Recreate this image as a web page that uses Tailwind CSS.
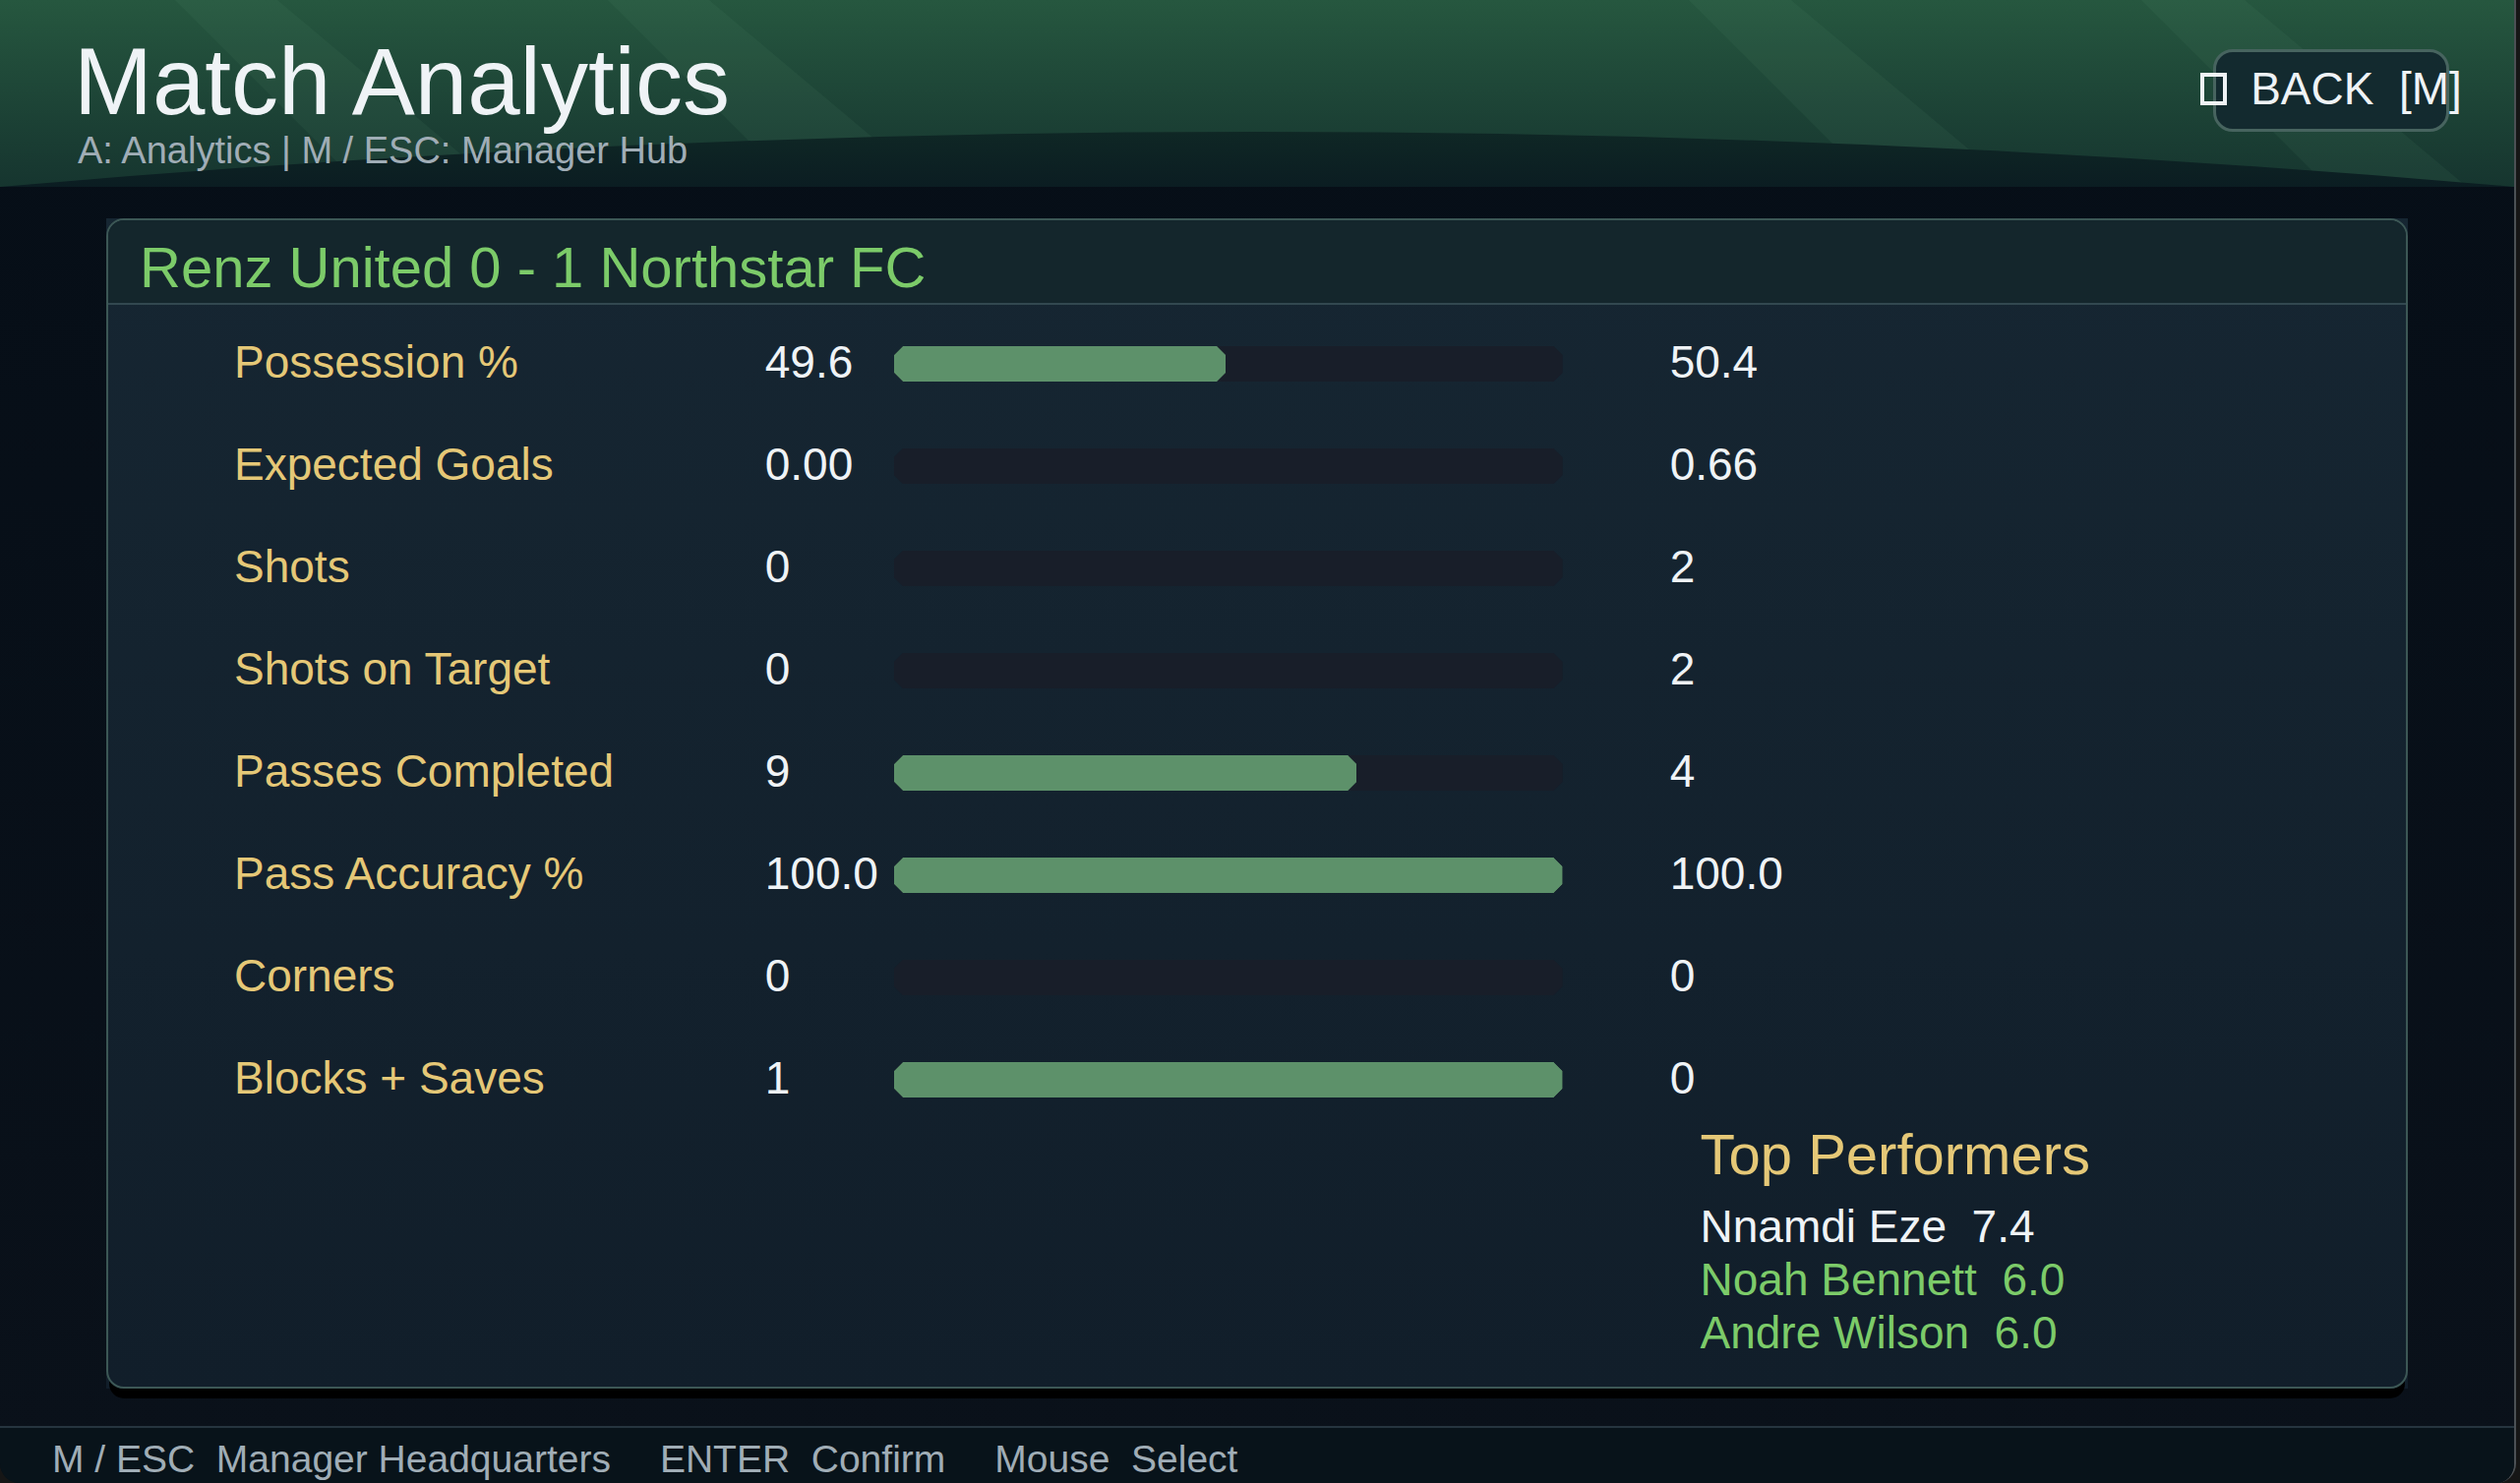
<!DOCTYPE html>
<html lang="en">
<head>
  <meta charset="UTF-8">
  <title>Match Analytics</title>
  <meta name="viewport" content="width=device-width, initial-scale=1.0">
  <script src="https://cdn.jsdelivr.net/npm/@tailwindcss/browser@4"></script>
</head>
<body class="bg-[#161616] font-['Liberation_Sans',Arial,sans-serif] text-[#eff3f6]">
  <div class="mr-1 min-h-screen flex flex-col overflow-hidden border-r-2 border-[#4b5054] rounded-b-[20px] bg-linear-to-b from-[#060e17] to-[#0a111a]">

    <header class="relative h-[190px] shrink-0 overflow-hidden bg-linear-to-b from-[#26573f] to-[#16352f] pt-[35px] pl-[75px] pr-[66px] flex justify-between items-start">
      <!-- pitch stripes and stand curve -->
      <svg class="absolute inset-0 w-full h-full" viewBox="0 0 2556 190" preserveAspectRatio="none" aria-hidden="true">
        <g fill="#5fa078" fill-opacity="0.09">
          <polygon points="178,0 282,0 508,190 368,190"/>
          <polygon points="618,0 721,0 947,190 808,190"/>
          <polygon points="1717,0 1821,0 2047,190 1907,190"/>
          <polygon points="2177,0 2282,0 2508,190 2367,190"/>
        </g>
        <linearGradient id="curve" x1="0" y1="0" x2="0" y2="1">
          <stop offset="0" stop-color="#0f2725"/>
          <stop offset="1" stop-color="#0b1d22"/>
        </linearGradient>
        <path d="M0 190 Q1278 78 2556 190 Z" fill="url(#curve)"/>
      </svg>
      <div class="relative">
        <h1 class="text-[96px] leading-[96px]">Match Analytics</h1>
        <p class="pl-1 text-[38px] leading-[44px] text-[#a0adb6]">A: Analytics | M / ESC: Manager Hub</p>
      </div>
      <button type="button" class="relative mt-[15px] w-[240px] h-[84px] rounded-[20px] border-[3px] border-[#47645f] bg-[#132a2f] flex justify-center items-center pb-1 text-[46px] leading-[46px] whitespace-pre"><span class="w-[27px] h-[33px] shrink-0 border-4 border-[#eff3f6] mr-6"></span>BACK  [M]</button>
    </header>

    <main class="grow px-[108px] pt-8 pb-[38px] flex flex-col">
      <div class="grow flex flex-col bg-linear-to-b from-[#162632] to-[#111e2a]">
        <section class="grow flex flex-col rounded-[18px] border-2 border-[#3c5755] shadow-[0_13px_0_-3px_#000000] overflow-hidden">
          <h2 class="h-[86px] shrink-0 px-8 pt-3 border-b-2 border-[#324850] bg-[#14262c] text-[58px] leading-[72px] text-[#7ccb69]">Renz United 0 - 1 Northstar FC</h2>
          <table class="mt-2 w-full table-fixed text-[46px] leading-[46px] text-left">
            <colgroup>
              <col class="w-[28.5%]">
              <col class="w-[5.7%]">
              <col class="w-[29.1%]">
              <col>
            </colgroup>
            <tbody id="stats"></tbody>
          </table>
          <div class="ml-[69.2%] pl-[2px] pb-6">
            <h3 class="text-[58px] leading-[48px] text-[#e5c877]">Top Performers</h3>
            <ul class="mt-[22px] text-[46px] leading-[54px] text-[#7ccb69]">
              <li class="whitespace-pre text-[#eff3f6]">Nnamdi Eze  7.4</li>
              <li class="whitespace-pre">Noah Bennett  6.0</li>
              <li class="whitespace-pre">Andre Wilson  6.0</li>
            </ul>
          </div>
        </section>
      </div>
    </main>

    <footer class="h-[58px] shrink-0 border-t-2 border-[#26353f] bg-[#08131a] pl-[53px] pt-2 flex items-center gap-[50px] text-[39px] leading-[44px] text-[#a0adb6]">
      <span class="whitespace-pre">M / ESC  Manager Headquarters</span>
      <span class="whitespace-pre">ENTER  Confirm</span>
      <span class="whitespace-pre">Mouse  Select</span>
    </footer>
  </div>

  <script>
    // label, home, away, home share of the bar (%)
    const stats = [
      ['Possession %', '49.6', '50.4', 49.6],
      ['Expected Goals', '0.00', '0.66', 0],
      ['Shots', '0', '2', 0],
      ['Shots on Target', '0', '2', 0],
      ['Passes Completed', '9', '4', 69.2],
      ['Pass Accuracy %', '100.0', '100.0', 100],
      ['Corners', '0', '0', 0],
      ['Blocks + Saves', '1', '0', 100]
    ];
    const octagon = '[clip-path:polygon(9px_0,calc(100%-9px)_0,100%_9px,100%_calc(100%-9px),calc(100%-9px)_100%,9px_100%,0_calc(100%-9px),0_9px)]';
    document.getElementById('stats').innerHTML = stats.map(([label, home, away, share]) => `
      <tr class="h-[104px]">
        <th scope="row" class="p-0 pl-32 pb-1 font-normal text-[#e5c877]">${label}</th>
        <td class="p-0 pl-[2px] pb-1 whitespace-nowrap">${home}</td>
        <td class="p-0">
          <div class="h-9 bg-[#181e29] ${octagon}">
            ${share ? `<div class="h-9 bg-[#5d916a] ${octagon}" style="width:${share}%"></div>` : ''}
          </div>
        </td>
        <td class="p-0 pl-[109px] pb-1">${away}</td>
      </tr>`).join('');
  </script>
</body>
</html>
